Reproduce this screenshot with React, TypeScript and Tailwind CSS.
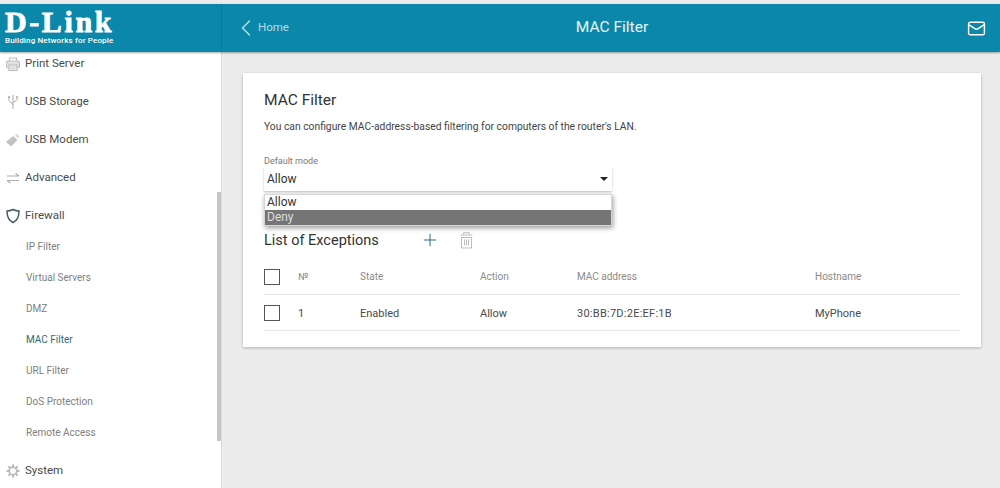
import { ChevronLeft, Mail, Plus } from 'lucide-react';
import type { ReactNode } from 'react';

const FONT = 'font-["Roboto","Noto_Sans",sans-serif]';

const SUB_ITEMS = ['IP Filter', 'Virtual Servers', 'DMZ', 'MAC Filter', 'URL Filter', 'DoS Protection', 'Remote Access'];

const PrinterIcon = () => (
  <svg width="16" height="16" viewBox="0 0 16 16" fill="none" stroke="#c0c0c0" strokeWidth="1.200">
    <path d="M4.500 5V2h7v3" />
    <rect x="1.500" y="5" width="13" height="7" rx="1.500" fill="#e2e2e2" />
    <rect x="4" y="9" width="8" height="5.500" fill="#f4f4f4" />
    <path d="M5.500 11h5M5.500 12.800h5" strokeWidth="0.800" />
  </svg>
);

const UsbIcon = () => (
  <svg width="12" height="16" viewBox="0 0 12 16" fill="none" stroke="#ababab" strokeWidth="1">
    <path d="M6 1v14M2 3v3.500C2 8 6 9 6 11M10 3v2.500C10 7 6 7.500 6 9" />
    <path d="M1 3h2M9 3h2" strokeWidth="1.500" />
  </svg>
);

const ModemIcon = () => (
  <svg width="16" height="16" viewBox="0 0 16 16" fill="#c2c2c2">
    <path d="M1 10 8 4l4.500 4L6 14.500z" />
    <path d="M10 3.500 12 2l2.500 2.500L13 6.300z" fill="#d8d8d8" />
  </svg>
);

const SlidersIcon = () => (
  <svg width="16" height="16" viewBox="0 0 16 16" fill="none" stroke="#adadad" strokeWidth="1.200">
    <path d="M2 6h12M10.500 3.500 14 6M14 10.500H2M5.500 13 2 10.500" />
  </svg>
);

const ShieldIcon = () => (
  <svg width="16" height="16" viewBox="0 0 16 16" fill="none" stroke="#3f5f62" strokeWidth="1.500">
    <path d="M8 1.500c2 1 4 1.500 6 1.500 0 5.500-1.500 9.500-6 11.500C3.500 12.500 2 8.500 2 3c2 0 4-.5 6-1.500z" />
  </svg>
);

const GearIcon = () => (
  <svg width="16" height="16" viewBox="0 0 16 16" fill="#fafafa" stroke="#b8b8b8">
    <path strokeWidth="2" d="M8 1.500v2.500M8 12v2.500M1.500 8H4M12 8h2.500M3.400 3.400l1.800 1.800M10.800 10.800l1.800 1.800M12.600 3.400l-1.800 1.800M5.200 10.800l-1.800 1.800" />
    <circle cx="8" cy="8" r="3.800" strokeWidth="1.600" />
  </svg>
);

const TrashIcon = () => (
  <svg width="13" height="17" viewBox="0 0 13 17" fill="none" stroke="#bcbcbc" strokeWidth="1">
    <path d="M3.500 2V.8h6V2M.5 3h12M1.500 5.500h10V16h-10z" />
    <path d="M4.500 7.500v6M6.500 7.500v6M8.500 7.500v6" />
  </svg>
);

function NavRow({ icon, label }: { icon: ReactNode; label: string }) {
  return (
    <div className="flex h-[38px] items-center pl-[4px] text-[11.500px] text-[#4a4a4a]">
      <span className="flex w-[21px] shrink-0 justify-center pr-[4px]">{icon}</span>
      {label}
    </div>
  );
}

function Checkbox() {
  return <span className="block h-4 w-4 border border-[#555]" />;
}

export default function App() {
  return (
    <div className={`${FONT} flex h-[488px] w-[1000px] flex-col overflow-hidden bg-[#ececec] pt-1`}>
      {/* Top bar */}
      <header className="relative z-10 flex h-[48px] shrink-0 items-center bg-[#0a87a9] text-white shadow-[0_1px_2px_rgba(0,0,0,0.35)]">
        <div className="flex h-full w-[222px] shrink-0 flex-col justify-start border-r border-[#0a7a99] pt-[5px] pl-[5px]">
          <span className="font-['Liberation_Serif'] text-[30px] leading-[26px] font-bold tracking-[2.600px] [-webkit-text-stroke:0.8px_white]">D-Link</span>
          <span className="mt-[1px] text-[8px] leading-[9px] font-medium tracking-[0.150px] whitespace-nowrap">Building Networks for People</span>
        </div>
        <div className="flex flex-1 items-center">
          <div className="flex w-[100px] items-center pl-[16px] text-[11.500px] text-[#b5dce6]">
            <ChevronLeft size={28} strokeWidth={1.300} className="-my-2 -mr-[2px] -ml-[6px]" />
            Home
          </div>
          <div className="flex-1 pl-[2px] text-center text-[15.500px] text-[#e8f5f8]">MAC Filter</div>
          <div className="flex w-[100px] justify-end pr-[14px]">
            <Mail size={19} strokeWidth={1.800} />
          </div>
        </div>
      </header>

      <div className="flex min-h-0 flex-1">
        {/* Sidebar */}
        <aside className="relative h-full w-[222px] shrink-0 overflow-hidden border-r border-[#dcdcdc] bg-white">
          <div className="-mt-[7px]">
            <NavRow icon={<PrinterIcon />} label="Print Server" />
            <NavRow icon={<UsbIcon />} label="USB Storage" />
            <NavRow icon={<ModemIcon />} label="USB Modem" />
            <NavRow icon={<SlidersIcon />} label="Advanced" />
            <NavRow icon={<ShieldIcon />} label="Firewall" />
            <div className="-mt-[4px] mb-[4px]">
              {SUB_ITEMS.map((item) => (
                <div
                  key={item}
                  className={`flex h-[31px] items-center pl-[26px] text-[10px] ${item === 'MAC Filter' ? 'text-[#2f6a78]' : 'text-[#808080]'}`}
                >
                  {item}
                </div>
              ))}
            </div>
            <NavRow icon={<GearIcon />} label="System" />
          </div>
          <div className="absolute top-[140px] right-0 h-[249px] w-[4px] bg-[#c6c6c6]" />
        </aside>

        {/* Content */}
        <main className="min-w-0 flex-1 pt-[21px] pr-[19px] pl-[21px]">
          <section className="relative h-[274px] bg-white px-[21px] pt-[17px] shadow-[0_1px_3px_rgba(0,0,0,0.25)]">
            <h1 className="text-[15.500px] leading-5 text-[#333]">MAC Filter</h1>
            <p className="mt-[10px] text-[10.300px] leading-[13px] whitespace-nowrap text-[#444]">
              You can configure MAC-address-based filtering for computers of the router's LAN.
            </p>

            <div className="mt-[23px] w-[348px]">
              <div className="text-[9px] leading-[11px] text-[#777]">Default mode</div>
              <div className="relative flex h-[24px] items-center justify-between pr-[4px] pl-[3px] text-[12px] text-[#333] shadow-[0_1px_2px_rgba(0,0,0,0.25)]">
                Allow
                <span className="h-0 w-0 border-x-[4px] border-t-[4px] border-x-transparent border-t-[#222]" />
                {/* open dropdown */}
                <div className="absolute top-[27px] left-0 z-10 w-full border border-[#d5d5d5] bg-white text-[12px] leading-[14px] shadow-[1px_2px_5px_rgba(0,0,0,0.4)]">
                  <div className="h-[15px] px-[2px] text-[#333]">Allow</div>
                  <div className="h-[15px] bg-[#757575] px-[2px] text-[#dedede]">Deny</div>
                </div>
              </div>
            </div>

            <div className="mt-[37px] flex h-[24px] items-center">
              <h2 className="w-[157px] pt-[2px] text-[14.500px] text-[#333]">List of Exceptions</h2>
              <Plus size={20} strokeWidth={1.200} className="-ml-[1px] text-[#2f6a78]" />
              <span className="ml-[20px] flex"><TrashIcon /></span>
            </div>

            <div className="mt-[7px] grid h-[36px] grid-cols-[34px_62px_120px_97px_238px_1fr] items-center border-b border-[#e8e8e8] text-[10px] text-[#8a8a8a]">
              <Checkbox />
              <span>№</span>
              <span>State</span>
              <span>Action</span>
              <span>MAC address</span>
              <span>Hostname</span>
            </div>
            <div className="grid h-[36px] grid-cols-[34px_62px_120px_97px_238px_1fr] items-center border-b border-[#e8e8e8] text-[11px] leading-[18px] text-[#4a4a4a]">
              <Checkbox />
              <span className="pt-[2px]">1</span>
              <span className="pt-[2px]">Enabled</span>
              <span className="pt-[2px]">Allow</span>
              <span className="pt-[2px] tracking-[0.250px]">30:BB:7D:2E:EF:1B</span>
              <span className="pt-[2px]">MyPhone</span>
            </div>
          </section>
        </main>
      </div>
    </div>
  );
}
